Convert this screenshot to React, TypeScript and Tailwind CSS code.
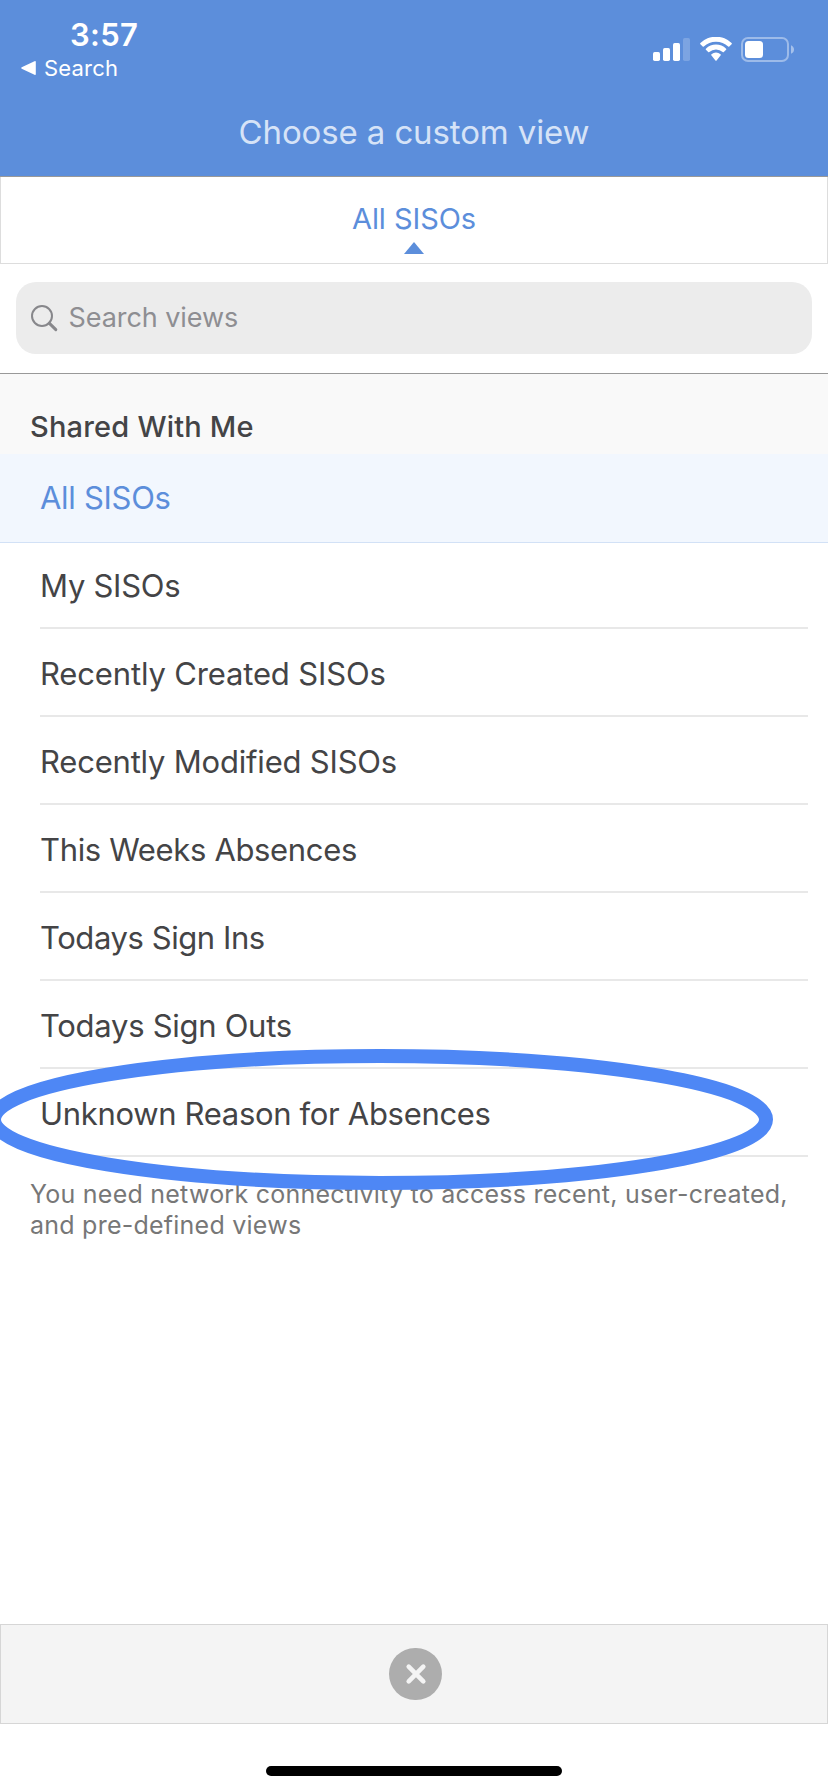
type View = {
  name: string;
  tracking: string;
};

const views: View[] = [
  { name: "My SISOs", tracking: "tracking-[-0.27px]" },
  { name: "Recently Created SISOs", tracking: "tracking-[-0.15px]" },
  { name: "Recently Modified SISOs", tracking: "tracking-[-0.2px]" },
  { name: "This Weeks Absences", tracking: "tracking-[-0.34px]" },
  { name: "Todays Sign Ins", tracking: "tracking-[-0.42px]" },
  { name: "Todays Sign Outs", tracking: "tracking-[-0.28px]" },
  { name: "Unknown Reason for Absences", tracking: "tracking-[-0.32px]" },
];

function SignalIcon() {
  return (
    <svg width="37" height="24" viewBox="0 0 37 24" fill="#fff">
      <rect x="0" y="15" width="7" height="9" rx="1.7" />
      <rect x="10" y="11" width="7" height="13" rx="1.7" />
      <rect x="20" y="6" width="7" height="18" rx="1.7" />
      <rect x="30" y="1" width="7" height="23" rx="1.7" opacity="0.2" />
    </svg>
  );
}

function WifiIcon() {
  return (
    <svg width="32" height="24" viewBox="0 0 32 24" fill="#fff">
      <path d="M0.4 7.2a.8.8 0 0 1 0-1.1a22.2 22.2 0 0 1 31.2 0a.8.8 0 0 1 0 1.1L29.3 9.6a.8.8 0 0 1-1.1 0a17.6 17.6 0 0 0-24.4 0a.8.8 0 0 1-1.1 0Z" />
      <path d="M5.9 12.8a.8.8 0 0 1 0-1.1a14.4 14.4 0 0 1 20.2 0a.8.8 0 0 1 0 1.1L23.8 15.1a.8.8 0 0 1-1.1 0a9.7 9.7 0 0 0-13.4 0a.8.8 0 0 1-1.1 0Z" />
      <path d="M11.5 18.5a.8.8 0 0 1 0-1.2a6.8 6.8 0 0 1 9 0a.8.8 0 0 1 0 1.2L16.6 23.5a.8.8 0 0 1-1.2 0Z" />
    </svg>
  );
}

function BatteryIcon() {
  return (
    <svg width="53" height="25" viewBox="0 0 53 25">
      <rect x="1" y="1" width="46" height="23" rx="6" fill="none" stroke="#fff" strokeWidth="2" opacity="0.4" />
      <rect x="4" y="4" width="18" height="17" rx="3.5" fill="#fff" />
      <path d="M50 8.2c1.9.7 3 2.3 3 4.3s-1.1 3.6-3 4.3Z" fill="#fff" opacity="0.45" />
    </svg>
  );
}

function SearchIcon() {
  return (
    <svg width="27" height="27" viewBox="0 0 27 27" fill="none" stroke="#87878b" strokeLinecap="round">
      <circle cx="11" cy="11" r="10" strokeWidth="2" />
      <path d="M18.2 18.2L24.8 24.6" strokeWidth="3" />
    </svg>
  );
}

export default function App() {
  return (
    <main className="relative w-[828px] h-[1792px] overflow-hidden flex flex-col bg-white font-[Inter,sans-serif] text-[#444446]">

      {/* STATUS BAR + TITLE */}

      <header className="h-[177px] shrink-0 bg-[#5c8edb] border-b border-[#999999] text-white">

        <div className="h-[88px] flex justify-between pl-[21px] pr-[34px]">

          <div>
            <p className="pt-4 pl-[49px] text-[31px] leading-[38px] font-semibold tracking-[0.3px]">3:57</p>
            <div className="flex items-center">
              <svg width="15" height="14" viewBox="0 0 15 14" fill="#fff">
                <path d="M13.5 0.2L0.7 6.3a.8.8 0 0 0 0 1.4L13.5 13.8a.9.9 0 0 0 1.3-.8V1a.9.9 0 0 0-1.3-.8Z" />
              </svg>
              <span className="pl-2 text-[22px] leading-7 tracking-[0.2px]">Search</span>
            </div>
          </div>

          <div className="flex items-start pt-[37px]">
            <SignalIcon />
            <div className="px-[9.5px]">
              <WifiIcon />
            </div>
            <BatteryIcon />
          </div>

        </div>

        <h1 className="text-center text-[33px] leading-[88px] font-normal text-[#d6e3f7] tracking-[-0.12px]">
          Choose a custom view
        </h1>

      </header>

      {/* CURRENT VIEW */}

      <div className="h-[87px] shrink-0 flex flex-col items-center border-x border-b border-[#dddddd] pt-6 text-[#5c8edb]">
        <span className="text-[29px] leading-9 tracking-[-0.07px]">All SISOs</span>
        <svg className="mt-[5px]" width="20" height="12" viewBox="0 0 20 12" fill="currentColor">
          <path d="M10 0L20 12H0Z" />
        </svg>
      </div>

      {/* SEARCH */}

      <div className="h-[110px] shrink-0 px-4 pt-[18px] border-b border-[#999999]">
        <div className="h-[72px] flex items-center rounded-[20px] bg-[#ececec] pl-[14.5px] text-[#8e8e92]">
          <SearchIcon />
          <span className="pl-[11px] text-[27px] leading-9 tracking-[-0.07px]">Search views</span>
        </div>
      </div>

      {/* VIEW LIST */}

      <h2 className="h-20 shrink-0 bg-[#f9f9f9] pl-[30px] pt-[35px] text-[29px] leading-9 font-medium tracking-[0.2px]">
        Shared With Me
      </h2>

      <div className="relative h-[89px] -mb-0.5 shrink-0 flex items-center border-b border-[#d2e1f6] bg-[#f2f7fe] pl-10 text-[31px] leading-10 tracking-[-0.3px] text-[#5c8edb]">
        All SISOs
      </div>

      <ul className="shrink-0 pl-10 pr-5">
        {views.map((view) => (
          <li key={view.name} className="h-[88px] flex items-center border-b-2 border-[#e8e8e8] pt-1">
            <span className={`text-[31px] leading-10 ${view.tracking}`}>{view.name}</span>
          </li>
        ))}
      </ul>

      <p className="pl-[30px] pt-[22px] text-[25px] leading-[31px] tracking-[0.24px] text-[#777777]">
        You need network connectivity to access recent, user-created,
        <br />
        and pre-defined views
      </p>

      {/* CLOSE BAR */}

      <footer className="mt-auto shrink-0">
        <div className="h-[100px] flex items-center justify-center border border-[#d6d6d6] bg-[#f4f4f4] pl-[3px]">
          <button className="w-[53px] h-[52px] flex items-center justify-center rounded-full bg-[#adadad]">
            <svg width="22" height="22" viewBox="0 0 22 22" stroke="#f4f4f4" strokeWidth="4.6" strokeLinecap="round">
              <path d="M3.7 3.7L18.3 18.3M18.3 3.7L3.7 18.3" />
            </svg>
          </button>
        </div>
        <div className="h-[68px] flex justify-center pt-[42px]">
          <div className="w-[296px] h-2.5 rounded-full bg-black" />
        </div>
      </footer>

      {/* HIGHLIGHT RING */}

      <svg
        className="absolute left-0 top-[1040px] pointer-events-none"
        width="828"
        height="160"
        viewBox="0 0 828 160"
        fill="none"
      >
        <ellipse cx="380" cy="79.5" rx="386" ry="63.4" stroke="#4e87f5" strokeWidth="14" />
      </svg>

    </main>
  );
}
